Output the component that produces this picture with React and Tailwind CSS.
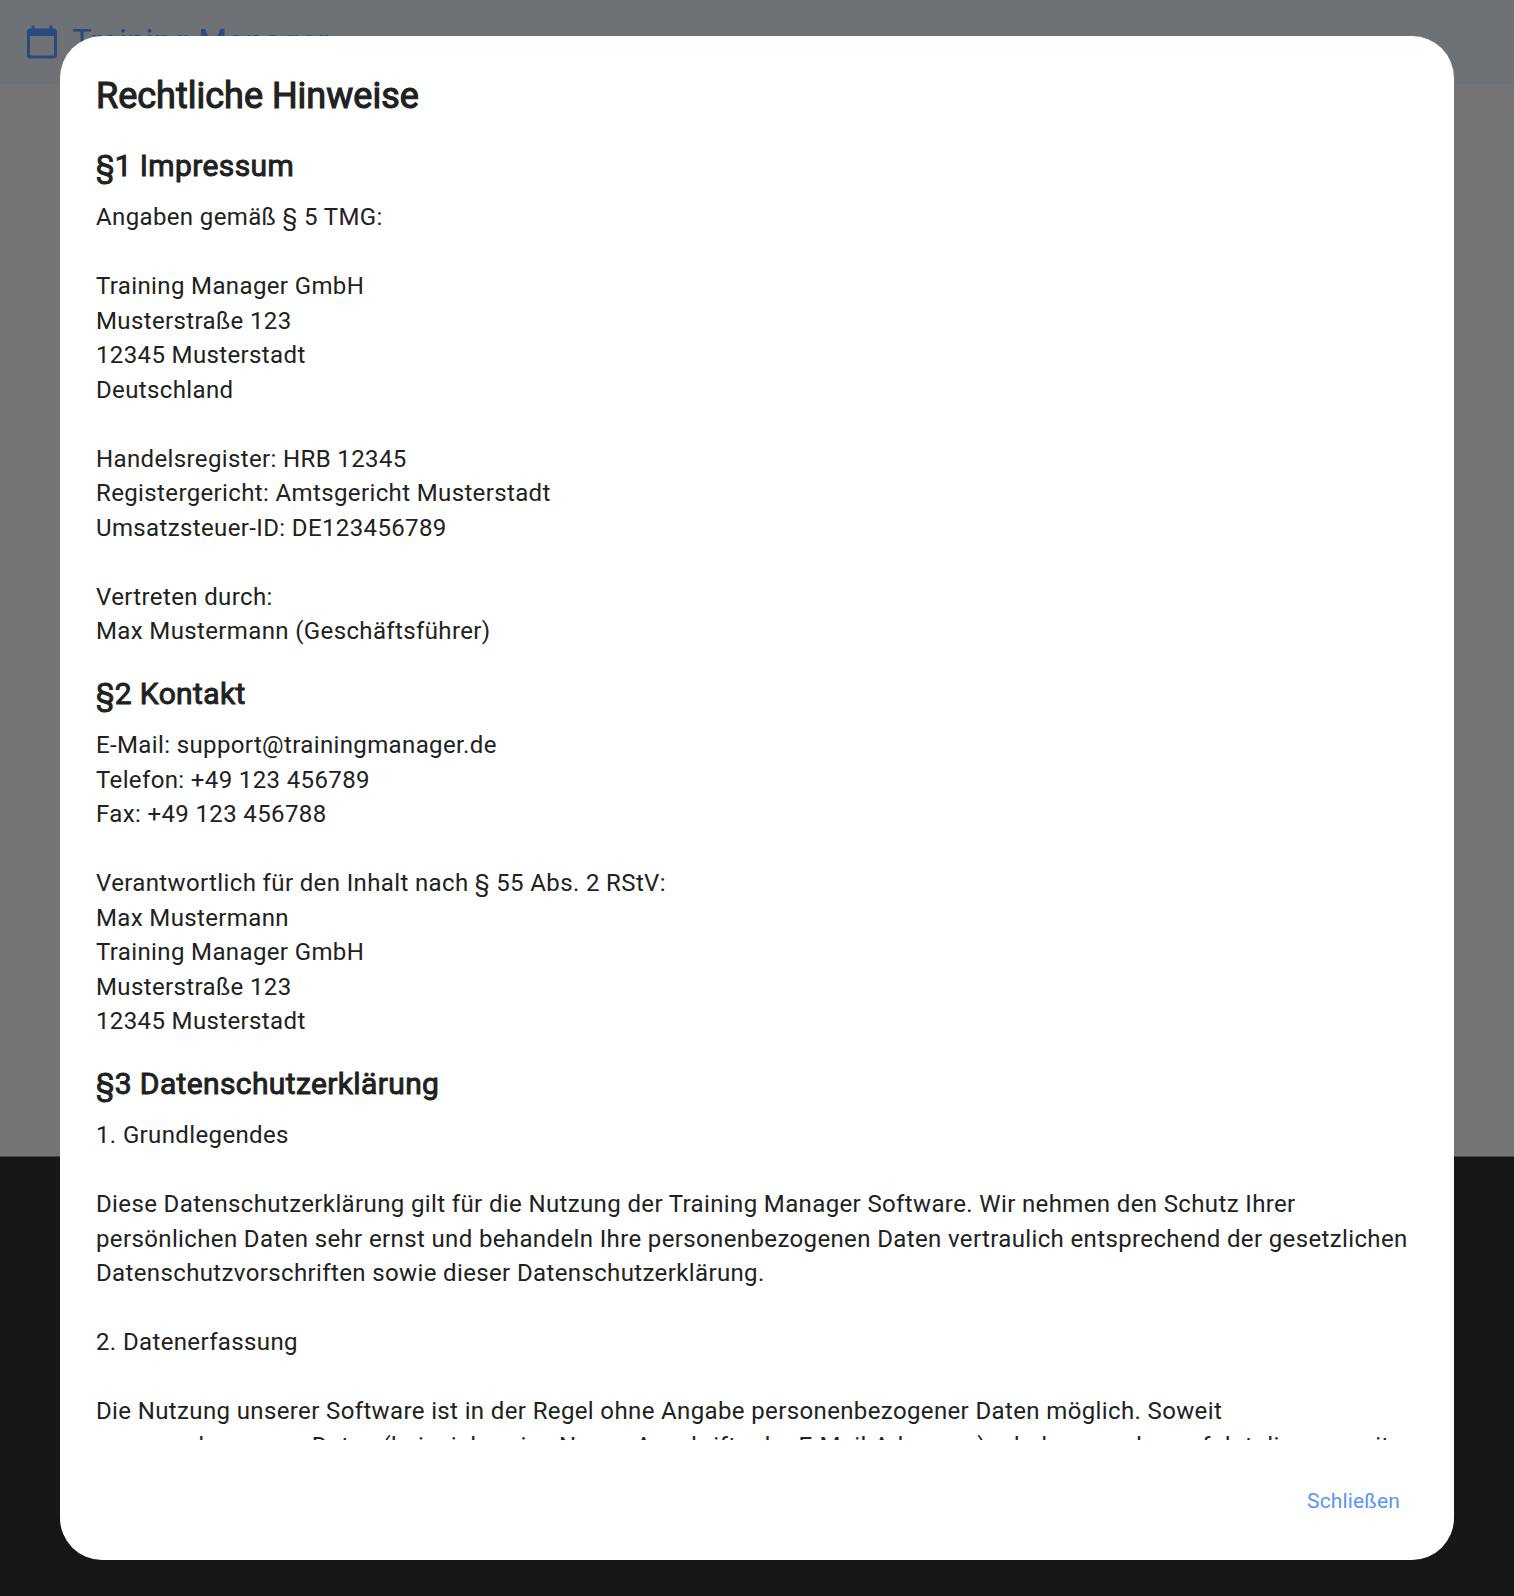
const sections = [
  {
    title: '§1 Impressum',
    text: `Angaben gemäß § 5 TMG:

Training Manager GmbH
Musterstraße 123
12345 Musterstadt
Deutschland

Handelsregister: HRB 12345
Registergericht: Amtsgericht Musterstadt
Umsatzsteuer-ID: DE123456789

Vertreten durch:
Max Mustermann (Geschäftsführer)`,
  },
  {
    title: '§2 Kontakt',
    text: `E-Mail: support@trainingmanager.de
Telefon: +49 123 456789
Fax: +49 123 456788

Verantwortlich für den Inhalt nach § 55 Abs. 2 RStV:
Max Mustermann
Training Manager GmbH
Musterstraße 123
12345 Musterstadt`,
  },
  {
    title: '§3 Datenschutzerklärung',
    text: `1. Grundlegendes

Diese Datenschutzerklärung gilt für die Nutzung der Training Manager Software. Wir nehmen den Schutz Ihrer persönlichen Daten sehr ernst und behandeln Ihre personenbezogenen Daten vertraulich entsprechend der gesetzlichen Datenschutzvorschriften sowie dieser Datenschutzerklärung.

2. Datenerfassung

Die Nutzung unserer Software ist in der Regel ohne Angabe personenbezogener Daten möglich. Soweit personenbezogene Daten (beispielsweise Name, Anschrift oder E-Mail-Adressen) erhoben werden, erfolgt dies, soweit möglich, stets auf freiwilliger Basis.`,
  },
];

function CalendarIcon() {
  return (
    <svg viewBox="0 0 24 24" className="size-9 fill-current" aria-hidden="true">
      <path d="M20 3h-1V1h-2v2H7V1H5v2H4c-1.1 0-2 .9-2 2v16c0 1.1.9 2 2 2h16c1.1 0 2-.9 2-2V5c0-1.1-.9-2-2-2zm0 18H4V8h16v13z" />
    </svg>
  );
}

function Page() {
  return (
    <div className="flex h-full flex-col bg-[#757575]">
      <header className="flex h-[84px] shrink-0 items-center gap-3 bg-[#6e7277] px-6 text-[#2b4a7c]">
        <CalendarIcon />
        <span className="text-[33px] leading-[42px]">Training Manager</span>
      </header>
      <main className="flex-1" />
      <footer className="h-[440px] shrink-0 border-t border-[#464646] bg-[#171717]" />
    </div>
  );
}

function LegalDialog() {
  return (
    <div
      role="dialog"
      className="absolute inset-x-[60px] inset-y-9 flex flex-col rounded-[42px] bg-white p-9 text-[#212121]"
    >
      <h1 className="shrink-0 text-[36px] leading-[48px] [-webkit-text-stroke:1.1px_#212121]">Rechtliche Hinweise</h1>
      <div className="mt-6 min-h-0 flex-1 overflow-hidden">
        {sections.map((s) => (
          <section key={s.title} className="mb-[23.5px]">
            <h2 className="mb-[12.5px] text-[30px] leading-[43.5px] tracking-[0.375px] [-webkit-text-stroke:0.95px_#212121]">
              {s.title}
            </h2>
            <p className="whitespace-pre-wrap text-2xl leading-[34.5px] tracking-[0.37px]">{s.text}</p>
          </section>
        ))}
      </div>
      <div className="mt-9 flex h-12 shrink-0 justify-end">
        <button className="px-[18px] pt-0.5 text-[21px] leading-[30px] tracking-[0.15px] text-[#5a96f0]">Schließen</button>
      </div>
    </div>
  );
}

export default function App() {
  return (
    <div className="relative h-[1596px] w-full overflow-hidden font-[Roboto,sans-serif]">
      <Page />
      <LegalDialog />
    </div>
  );
}
